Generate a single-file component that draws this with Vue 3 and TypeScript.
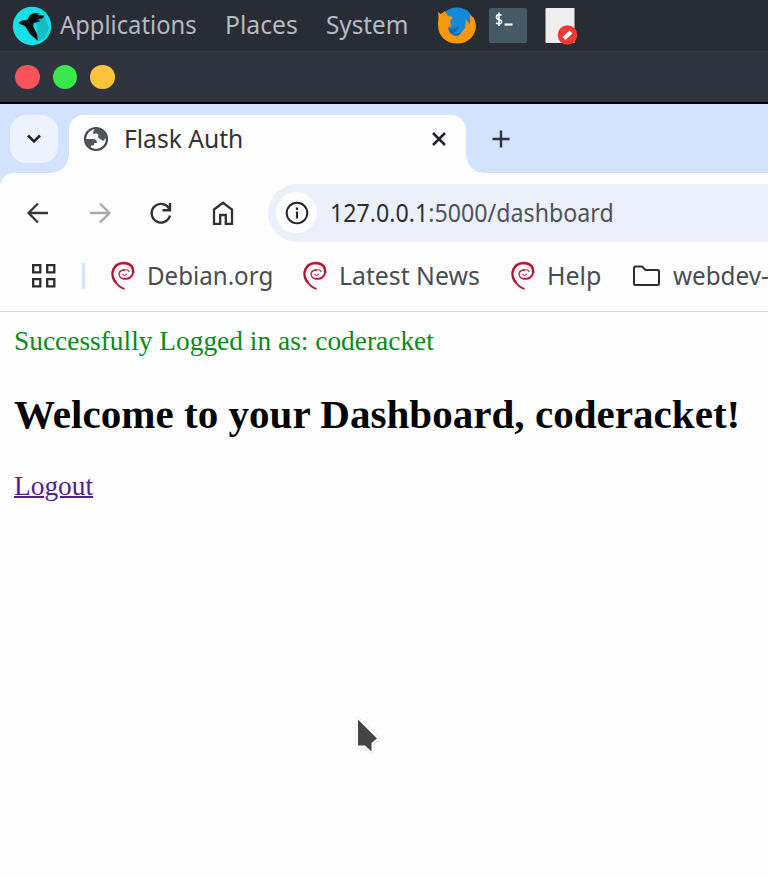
<script setup lang="ts">
interface Bookmark {
  label: string
  kind: 'debian' | 'folder'
  width: number
  stretch: number
}

const menus = [
  { label: 'Applications', width: 164.5, stretch: 0.932 },
  { label: 'Places', width: 101, stretch: 0.97 },
  { label: 'System', width: 111, stretch: 0.95 },
]
const lights = ['#f9525a', '#38e84b', '#fcc438']
const bookmarks: Bookmark[] = [
  { label: 'Debian.org', kind: 'debian', width: 192, stretch: 0.945 },
  { label: 'Latest News', kind: 'debian', width: 207.5, stretch: 0.972 },
  { label: 'Help', kind: 'debian', width: 122, stretch: 0.98 },
  { label: 'webdev-', kind: 'folder', width: 150, stretch: 0.95 },
]
const user = 'coderacket'
const scaleX = (s: number) => ({ transform: `scaleX(${s})` })
</script>

<template>
  <div class="screen">
    <header class="panel">
      <svg class="parrot" width="40" height="40" viewBox="0 0 40 40">
        <circle cx="20" cy="20" r="19.2" fill="#16e0e6" />
        <path d="M24 13 33 11 37 22 33 32 26 35Z" fill="#10a9b0" opacity=".6" />
        <path d="M6.500 17 10 14.500 15 14 18 9 22 7 28 7 25 9 32.500 9.500 31 12 25 14 29 15 22 17 21 20 25 28 26 35 18 28 13 20 9 18.500Z" fill="#090d10" />
      </svg>
      <nav class="menus">
        <div v-for="m in menus" :key="m.label" class="menu" :style="{ width: m.width + 'px' }">
          <span class="ui" :style="scaleX(m.stretch)">{{ m.label }}</span>
        </div>
      </nav>
      <svg class="launchers" width="142" height="40" viewBox="0 0 142 40">
        <circle cx="20" cy="19" r="17.5" fill="#1689d8" />
        <path d="M1 6 4 8 8 5 11 10 16 11 13 15 14 20 11 22 13 27 18 29 24 27 28 22 29 16 27 12 33 18 33 9 37 12 39 19C39 30 31 37.500 20 37.500S1 30 1 19C1 15 2 12 1 6Z" fill="#f9980e" />
        <path d="M11 21Q14 24 18 22L22 20Q21 26 16 27Q20 29 24 26Q22 32 16 29Q12 27 11 21Z" fill="#166ab5" />
        <rect x="52" y="2" width="38" height="35" rx="2" fill="#455a64" />
        <g fill="none" stroke="#f2f7f9" stroke-width="1.700">
          <path d="M64.500 9.300Q59.500 7.500 59.500 11Q59.500 13 62 13.500Q65 14 64.500 16.500Q63.500 19 59 17M62 6.500V20" />
          <path d="M67.500 18.500H75.500" stroke-width="2.200" />
        </g>
        <path d="M109.500 2H137.500V37H109.500Q108.500 37 108.500 36V3Q108.500 2 109.500 2Z" fill="#efefef" />
        <circle cx="130.500" cy="29" r="9.800" fill="#f23a30" />
        <path d="M127 32.500 134 26" stroke="#fff" stroke-width="4" />
      </svg>
    </header>

    <div class="titlebar">
      <i v-for="c in lights" :key="c" class="light" :style="{ background: c }"></i>
    </div>

    <div class="browser">
      <div class="tabs">
        <button class="search" aria-label="Search tabs">
          <svg width="20" height="14" viewBox="0 0 20 14"><path d="M4 3.500 10 9.500 16 3.500" fill="none" stroke="#202328" stroke-width="2.500" /></svg>
        </button>
        <div class="tab">
          <svg width="26" height="26" viewBox="0 0 26 26">
            <circle cx="13" cy="13" r="11" fill="#fff" stroke="#45484d" stroke-width="2.200" />
            <path d="M13 2Q10 4 10 8L14 7.500Q16 8.500 15 11.500L20 15 23 12Q23 4 13 2Z" fill="#53565b" />
            <path d="M2.500 13H10Q14 13 14 17H11V19.500H8V22Q3 19 2.500 13Z" fill="#53565b" />
          </svg>
          <span class="ui tab-title">Flask Auth</span>
          <svg class="close" width="18" height="18" viewBox="0 0 18 18"><path d="M3 3 15 15M15 3 3 15" stroke="#202328" stroke-width="2.500" /></svg>
        </div>
        <svg class="plus" width="20" height="20" viewBox="0 0 20 20"><path d="M10 1.500V18.500M1.500 10H18.500" stroke="#303338" stroke-width="2.400" /></svg>
      </div>

      <div class="toolbar">
        <div class="nav">
          <svg width="24" height="24" viewBox="0 0 24 24"><path d="M22 12H3M12 2.500 2.500 12 12 21.500" fill="none" stroke="#34363a" stroke-width="2.300" /></svg>
          <svg width="24" height="24" viewBox="0 0 24 24"><path d="M2 12H21M12 2.500 21.500 12 12 21.500" fill="none" stroke="#a9a9ab" stroke-width="2.300" /></svg>
          <svg width="24" height="24" viewBox="0 0 24 24"><path d="M21 14.500A9.300 9.300 0 1 1 20.500 8.500M21 2V9.300H13.500" fill="none" stroke="#2f3135" stroke-width="2.400" /></svg>
          <svg width="24" height="24" viewBox="0 0 24 24"><path d="M3 8.500 12 1.800 21 8.500V23H14.800V14H9.200V23H3Z" fill="none" stroke="#2f3135" stroke-width="2.300" /></svg>
          <div class="address">
            <span class="info">
              <svg width="24" height="24" viewBox="0 0 24 24"><circle cx="12" cy="12" r="10.300" fill="none" stroke="#25272a" stroke-width="2" /><path d="M12 10.500V17.500M12 6.500V9" stroke="#25272a" stroke-width="2.200" /></svg>
            </span>
            <span class="ui url"><b>127.0.0.1</b>:5000/dashboard</span>
          </div>
        </div>
        <div class="bookmarks">
          <svg class="grid" width="26" height="26" viewBox="0 0 26 26"><path d="M2.200 2.200H9.300V9.300H2.200ZM16.200 2.200H23.300V9.300H16.200ZM2.200 16.200H9.300V23.300H2.200ZM16.200 16.200H23.300V23.300H16.200Z" fill="none" stroke="#292b2e" stroke-width="2.300" /></svg>
          <i class="divider"></i>
          <div v-for="b in bookmarks" :key="b.label" class="bookmark" :class="b.kind" :style="{ width: b.width + 'px' }">
            <svg v-if="b.kind === 'debian'" width="26" height="30" viewBox="0 0 26 30">
              <g fill="none" stroke="#be1238" stroke-linecap="round">
                <path d="M16.500 13.500Q14 15.500 12.500 13.500" stroke-width="1" />
                <path d="M14.500 9Q9.500 9 9 13Q9.500 17.500 14 17.800" stroke-width="1.300" />
                <path d="M14 17.800Q21.500 18.500 23.200 11.500" stroke-width="1.900" />
                <path d="M14.500 9Q18 8 19 10.500" stroke-width="1.100" />
                <path d="M23.200 11.500Q23.500 2.500 14 2Q4.500 2 2.500 11.500Q2 17 5.500 21" stroke-width="2.400" />
                <path d="M5 20Q8.500 26 14 27.800" stroke-width="1.700" />
              </g>
            </svg>
            <svg v-else width="30" height="24" viewBox="0 0 30 24"><path d="M3.500 2.500H10L13.500 6H25.500Q27 6 27 7.500V19.500Q27 21 25.500 21H3.500Q2 21 2 19.500V4Q2 2.500 3.500 2.500Z" fill="none" stroke="#2b2d30" stroke-width="2" /></svg>
            <span class="ui" :style="scaleX(b.stretch)">{{ b.label }}</span>
          </div>
        </div>
      </div>
    </div>

    <main class="page">
      <p class="flash">Successfully Logged in as: {{ user }}</p>
      <h2>Welcome to your Dashboard, {{ user }}!</h2>
      <a href="#">Logout</a>
      <svg class="cursor" width="30" height="42" viewBox="0 0 30 42">
        <path d="M5 4V29.500H12L18.500 35V27L24 22.500Z" fill="#444" stroke="#ededed" stroke-width="6" stroke-linejoin="round" />
        <path d="M5 4V29.500H12L18.500 35V27L24 22.500Z" fill="#444" stroke="#fff" stroke-width="4" stroke-linejoin="round" />
        <path d="M5 3.500V29.500H12L18.500 35.500V27L24 22.500Z" fill="#444" />
      </svg>
    </main>
  </div>
</template>

<style>
body {
  margin: 0;
  overflow: hidden;
}
</style>

<style scoped>
.screen {
  width: 768px;
  height: 878px;
  overflow: hidden;
  background: #fefefe;
  display: flex;
  flex-direction: column;
}
.screen > * {
  flex-shrink: 0;
}
.ui {
  display: inline-block;
  padding-bottom: 3px;
  font: 25.500px/36px "Noto Sans", sans-serif;
  transform-origin: left;
  white-space: nowrap;
}
.panel {
  height: 51px;
  box-sizing: border-box;
  display: flex;
  align-items: center;
  padding-left: 12px;
  background: #282c34;
}
.menus {
  display: flex;
  margin-left: 8px;
  color: #b5bac4;
}
.launchers {
  margin-top: 1px;
}
.titlebar {
  height: 53px;
  box-sizing: border-box;
  border-top: 1px solid #343944;
  border-bottom: 2px solid #030407;
  display: flex;
  align-items: center;
  gap: 13px;
  padding-left: 15px;
  background: #2f343f;
}
.light {
  width: 24.500px;
  height: 24.500px;
  border-radius: 50%;
}
.browser {
  background: #d3e3fd;
}
.tabs {
  height: 69px;
  display: flex;
}
.search {
  width: 48px;
  height: 48px;
  margin: 11px 11px 0 10px;
  padding: 0;
  border: 0;
  border-radius: 16px;
  display: grid;
  place-items: center;
  background: #ecf3fe;
}
.tab {
  position: relative;
  width: 397px;
  height: 58px;
  box-sizing: border-box;
  margin-top: 11px;
  padding: 0 18px 10px 14px;
  display: flex;
  align-items: center;
  border-radius: 15px 15px 0 0;
  background: #fefefe;
}
.tab::before,
.tab::after {
  content: "";
  position: absolute;
  bottom: 0;
  width: 18px;
  height: 18px;
}
.tab::before {
  right: 100%;
  background: radial-gradient(circle at 0 0, transparent 17.500px, #fefefe 18px);
}
.tab::after {
  left: 100%;
  background: radial-gradient(circle at 100% 0, transparent 17.500px, #fefefe 18px);
}
.tab-title {
  margin-left: 15px;
  transform: scaleX(0.965);
  color: #303236;
}
.close {
  margin-left: auto;
}
.plus {
  margin: 25px 0 0 25px;
}
.toolbar {
  height: 139px;
  box-sizing: border-box;
  border-bottom: 1px solid #d8d9db;
  border-top-left-radius: 14px;
  background: #fefefe;
}
.nav {
  display: flex;
  align-items: center;
  height: 79px;
  padding-left: 26px;
}
.nav > svg {
  margin-right: 37.500px;
}
.address {
  flex: 1;
  height: 58px;
  display: flex;
  align-items: center;
  margin-left: -4px;
  padding-left: 8px;
  border-radius: 29px 0 0 29px;
  background: #ecf0fa;
}
.info {
  width: 41px;
  height: 41px;
  border-radius: 50%;
  display: grid;
  place-items: center;
  background: #fefefe;
}
.url {
  margin-left: 13px;
  padding-bottom: 2px;
  transform: scaleX(0.91);
  color: #505359;
}
.url b {
  font-weight: 400;
  color: #2d2f33;
}
.bookmarks {
  display: flex;
  align-items: center;
  height: 48px;
  padding-left: 31px;
}
.grid {
  flex-shrink: 0;
}
.divider {
  width: 3px;
  height: 26px;
  flex-shrink: 0;
  margin: 0 25px 0 25px;
  background: #d3e3fd;
}
.bookmark {
  display: flex;
  align-items: center;
  flex-shrink: 0;
  color: #494c52;
}
.bookmark .ui {
  margin-left: 11px;
}
.page {
  position: relative;
  flex: 1;
  padding: 14px;
  font-family: "Liberation Serif", serif;
  font-size: 27.400px;
  line-height: 31px;
}
.flash {
  margin: 0;
  color: #078b16;
}
h2 {
  margin: 34px 0 34px;
  font-size: 41.100px;
  line-height: 46px;
  white-space: nowrap;
  color: #050507;
}
a {
  color: #51218c;
  text-decoration-thickness: 2px;
}
.cursor {
  position: absolute;
  left: 353px;
  top: 404px;
}
</style>
